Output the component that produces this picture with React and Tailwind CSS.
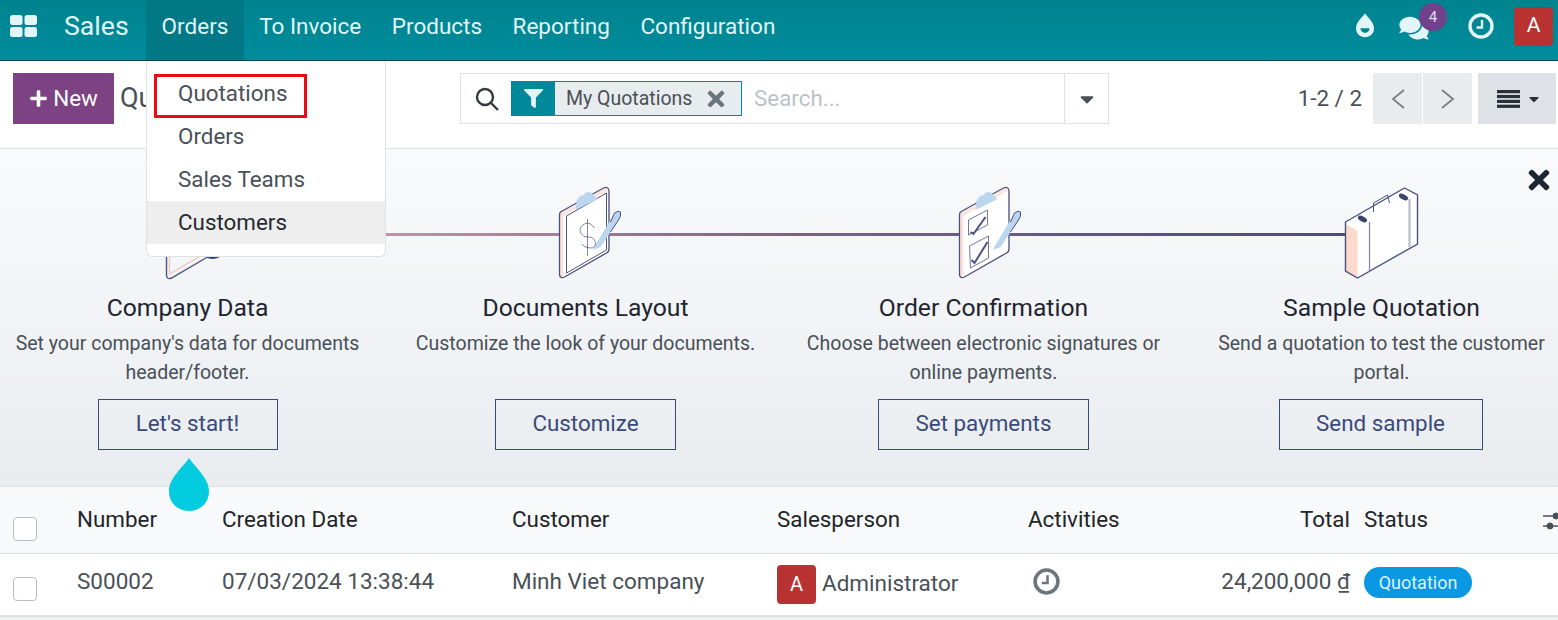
import React from "react";
import { FaPlus, FaComments, FaFilter, FaTimes, FaCaretDown } from "react-icons/fa";

function Drop({ className, inner }) {
  return (
    <svg viewBox="0 0 40 54" className={className} fill="currentColor">
      <path d="M20 0C25 8 40 20 40 33C40 45 31 53 20 53C9 53 0 45 0 33C0 20 15 8 20 0Z" />
      {inner && <path d="M20 43C14 43 10 38 10 33H30C30 38 26 43 20 43Z" fill="#00828f" />}
    </svg>
  );
}

function Clock({ className, stroke }) {
  return (
    <svg viewBox="0 0 26 26" className={className} fill="none" stroke={stroke}>
      <circle cx="13" cy="13" r="11" strokeWidth="3.4" />
      <path d="M14 7V14.5H8.5" strokeWidth="2.4" />
    </svg>
  );
}

function Clipboard({ checks, x0 }) {
  return (
    <svg viewBox={`${x0} 0 120 115`} className="w-[120px] h-[115px]" fill="none">
      <path d="M29 39L75 13L79 15V76L33 103L29 100Z" fill="#fde3dc" />
      <path d="M33 41L78 15V76L33 102Z" fill="#ffffff" />
      <path d="M30 37L73 13Q78 11 78.500 16V74Q78.500 77 76 78L34 102Q30 104 29 100V40Q29 38 30 37Z" stroke="#4a5380" strokeWidth="1.300" />
      {!checks && <path d="M36 41L76 18V75L36 98Z" stroke="#4a5380" strokeWidth="1" />}
      <path d="M45 35L46 26Q48 21 53 20Q56 15 61 18L65 22L67 24Z" fill="#bcd6f0" />
      <path d="M62 75L84 38Q88 35 90 37Q91 41 88 45L70 72Z" fill="#bcd6f0" />
      <path d="M80 47L84 38Q88 35 90 37Q91 41 88 45L80 57" stroke="#4a5380" strokeWidth="1" />
      {checks ? (
        <g stroke="#4a5380">
          <path d="M38 45L57 35V50L38 60Z" strokeWidth="0.800" />
          <path d="M39 71L58 61V83L40 93Z" strokeWidth="0.800" />
          <path d="M40 57L43 59L55 42" strokeWidth="2" />
          <path d="M41 85L44 88L57 67" strokeWidth="2" />
        </g>
      ) : (
        <g stroke="#4a5380" strokeWidth="0.700">
          <path d="M64 53Q59 46 54 49Q48 52 50 58Q53 63 58 62Q64 62 65 68Q65 73 60 73Q54 73 51 69" />
          <path d="M57 44V81" />
        </g>
      )}
    </svg>
  );
}

function Company() {
  return (
    <svg viewBox="0.5 0 120 115" className="w-[120px] h-[115px]" fill="none">
      <path d="M39 60V100Q39 105 44 103L80 82" stroke="#4a5380" strokeWidth="1.400" />
      <path d="M42 60V99L78 78" stroke="#f4c9bd" strokeWidth="1.400" />
      <ellipse cx="85" cy="79" rx="9" ry="5" fill="#39456f" />
    </svg>
  );
}

function Suitcase() {
  return (
    <svg viewBox="0.5 0 120 115" className="w-[120px] h-[115px]" fill="none">
      <path d="M24 47L83 13L96 20V69L36 103L24 96Z" fill="#ffffff" />
      <path d="M24 49L36 56V103L24 96Z" fill="#fbd9cd" />
      <path d="M88 24V72" stroke="#b4b8c8" strokeWidth="2" />
      <path d="M24 47L83 13L96 20V69L36 103L24 96Z" stroke="#4a5380" strokeWidth="1.400" />
      <path d="M48 47V97" stroke="#7a81a0" strokeWidth="1.200" />
      <path d="M52 37V28L66 20L68 28" stroke="#4a5380" strokeWidth="1" />
      <ellipse cx="41" cy="44" rx="5" ry="2.500" transform="rotate(28 41 44)" fill="#39456f" />
      <ellipse cx="82" cy="22" rx="5" ry="2.500" transform="rotate(28 82 22)" fill="#39456f" />
    </svg>
  );
}

function Step({ art, title, text, cta, btn }) {
  return (
    <div className="flex flex-col items-center px-[15px] text-center">
      <div className="h-[115px]">{art}</div>
      <div className="mt-[2px] text-[24.700px] leading-[32px] text-[#1f2530]">{title}</div>
      <div className="mt-[5px] h-[58px] text-[19.500px] leading-[29px] text-[#495057]">{text}</div>
      <button className={`mt-[12px] h-[51px] pb-[2px] ${btn} border border-[#3a4a78] text-[22.400px] text-[#3a4a78]`}>{cta}</button>
    </div>
  );
}

export default function App() {
  const navItems = ["To Invoice", "Products", "Reporting", "Configuration"];
  return (
    <div className="relative w-[1558px] h-[620px] overflow-hidden bg-[#eef0f2] font-['Roboto',sans-serif]">
      <header className="flex items-center h-[61px] border-b border-[#06454c] bg-[#00899a] bg-gradient-to-b from-[#00838f] to-[#008c9c] text-[#e2f6f8]">
        <svg viewBox="0 0 27 22" className="ml-[10px] w-[27px] h-[22px] mb-[8px]" fill="currentColor">
          <rect x="0" y="0" width="12.500" height="10" rx="2.500" />
          <rect x="14.500" y="0" width="12.500" height="10" rx="2.500" />
          <rect x="0" y="12" width="12.500" height="10" rx="2.500" />
          <rect x="14.500" y="12" width="12.500" height="10" rx="2.500" />
        </svg>
        <span className="ml-[27px] w-[82px] text-[26.700px] pb-[7px]">Sales</span>
        <div className="flex items-center justify-center w-[98px] h-full pb-[7px] bg-[#007885] text-[22.500px]">Orders</div>
        {navItems.map((t) => (
          <div key={t} className="px-[15.250px] pb-[7px] text-[22.500px]">{t}</div>
        ))}
        <div className="ml-auto flex items-center pr-[5px] pb-[8px]">
          <Drop className="w-[18px] h-[25px] -mt-[2px]" inner />
          <FaComments className="ml-[25px] w-[30px] h-[26px] mt-[3px]" />
          <Clock className="ml-[39px] w-[26px] h-[26px]" stroke="#e2f6f8" />
          <div className="ml-[20px] flex items-center justify-center w-[39px] h-[39px] rounded-[4px] bg-[#b83232] text-[21px] text-white">A</div>
        </div>
      </header>

      <section className="flex items-start h-[88px] border-b border-[#dee2e6] bg-white pt-[12px]">
        <div className="flex items-center w-[460px] pl-[13px]">
          <button className="flex items-center justify-center gap-[5px] w-[101px] h-[51px] bg-[#7c4284] text-[22.400px] text-white">
            <FaPlus className="w-[19px] h-[19px]" />New
          </button>
          <span className="ml-[6px] text-[27px] text-[#495057]">Quotations</span>
        </div>
        <div className="flex items-center w-[649px] h-[51px] border border-[#dee2e6]">
          <svg viewBox="0 0 24 24" className="ml-[14px] w-[24px] h-[24px]" fill="none" stroke="#343a40" strokeWidth="2.400">
            <circle cx="10" cy="10" r="8" />
            <path d="M16 16L23 23" />
          </svg>
          <div className="ml-[12px] flex items-center w-[231px] h-[35px] border border-[#00899a] bg-[#e9ecef]">
            <div className="flex items-center justify-center w-[43px] h-full bg-[#00899a] text-[#e2f6f8]">
              <FaFilter className="w-[19px] h-[19px]" />
            </div>
            <span className="ml-[11px] text-[19.500px] text-[#495057]">My Quotations</span>
            <FaTimes className="ml-[12px] w-[24px] h-[24px] text-[#6c757d]" />
          </div>
          <span className="ml-[12px] text-[22.400px] text-[#bcc1c7]">Search...</span>
          <div className="ml-auto flex items-center justify-center w-[44px] h-full border-l border-[#dee2e6]">
            <FaCaretDown className="w-[22px] h-[22px] text-[#495057]" />
          </div>
        </div>
        <span className="ml-auto h-[51px] flex items-center text-[22.400px] text-[#495057]">1-2 / 2</span>
        <button className="ml-[11px] flex items-center justify-center w-[49px] h-[51px] bg-[#e9ecef]">
          <svg viewBox="0 0 16 22" className="w-[16px] h-[22px]" fill="none" stroke="#7b7f84" strokeWidth="1.800"><path d="M14 2L3 11L14 20" /></svg>
        </button>
        <button className="ml-px flex items-center justify-center w-[49px] h-[51px] bg-[#e9ecef]">
          <svg viewBox="0 0 16 22" className="w-[16px] h-[22px]" fill="none" stroke="#7b7f84" strokeWidth="1.800"><path d="M2 2L13 11L2 20" /></svg>
        </button>
        <button className="ml-[6px] mr-[2px] flex items-center justify-center gap-[6px] pl-[4px] w-[78px] h-[51px] bg-[#dee2e6]">
          <svg viewBox="0 0 23 18" className="w-[23px] h-[18px]" fill="#2b3038">
            <rect y="0" width="23" height="3.200" />
            <rect y="4.900" width="23" height="3.200" />
            <rect y="9.800" width="23" height="3.200" />
            <rect y="14.700" width="23" height="3.200" />
          </svg>
          <FaCaretDown className="w-[16px] h-[16px] text-[#2b3038]" />
        </button>
      </section>

      <section className="relative h-[338px] overflow-hidden border-b border-[#dee2e6] bg-gradient-to-b from-[#f9fafc] to-[#e9ecef]">
        <div className="absolute left-[187px] top-[84px] w-[1194px] h-[3px] bg-gradient-to-r from-[#e6a9b5] via-[#7a6484] to-[#464b7c]" />
        <FaTimes className="absolute left-[1524px] top-[16px] w-[30px] h-[30px] text-[#1d2530]" />
        <div className="relative -ml-[11.500px] pt-[26px] grid grid-cols-[398px_398px_398px_398px] w-[1592px]">
          <Step art={<Company />} title="Company Data" text="Set your company's data for documents header/footer." cta="Let's start!" btn="w-[180px]" />
          <Step art={<Clipboard x0={-4.5} />} title="Documents Layout" text="Customize the look of your documents." cta="Customize" btn="w-[181px]" />
          <Step art={<Clipboard checks x0={-6.5} />} title="Order Confirmation" text="Choose between electronic signatures or online payments." cta="Set payments" btn="w-[211px]" />
          <Step art={<Suitcase />} title="Sample Quotation" text="Send a quotation to test the customer portal." cta="Send sample" btn="w-[204px] mr-[2px]" />
        </div>
      </section>

      <div className="grid grid-cols-[77px_145px_290px_265px_251px_161px_161px_208px] items-center h-[67px] border-b border-[#dee2e6] bg-[#f8f9fa] text-[22.400px] text-[#212529]">
        <span className="ml-[13px] mt-[18px] w-[24px] h-[24px] rounded-[4px] border border-[#b9bdc2] bg-white" />
        <span>Number</span>
        <span>Creation Date</span>
        <span>Customer</span>
        <span>Salesperson</span>
        <span>Activities</span>
        <span className="text-right">Total</span>
        <span className="pl-[14px] flex items-center justify-between">
          Status
          <svg viewBox="0 0 15 20" className="w-[15px] h-[20px] mt-[5px] shrink-0" fill="#495057" stroke="#495057">
            <path d="M0 4H15" strokeWidth="1.500" />
            <circle cx="13" cy="4" r="3" />
            <path d="M0 14H15" strokeWidth="1.500" />
            <circle cx="7" cy="14" r="3" />
          </svg>
        </span>
      </div>

      <div className="grid grid-cols-[77px_145px_290px_265px_251px_161px_161px_208px] items-center h-[63px] pb-[5px] border-b-2 border-[#dee2e6] bg-white text-[22.500px] text-[#495057]">
        <span className="ml-[13px] mt-[13px] w-[24px] h-[24px] rounded-[4px] border border-[#b9bdc2] bg-white" />
        <span>S00002</span>
        <span>07/03/2024 13:38:44</span>
        <span>Minh Viet company</span>
        <span className="flex items-center">
          <span className="flex items-center justify-center w-[39px] h-[39px] mt-[4px] rounded-[4px] bg-[#b83232] text-[20px] text-white">A</span>
          <span className="ml-[6px] mt-[3px]">Administrator</span>
        </span>
        <span className="pl-[5px]"><Clock className="w-[27px] h-[27px] -mt-[1px]" stroke="#6c757d" /></span>
        <span className="text-right">24,200,000 <span className="underline">₫</span></span>
        <span className="pl-[14px]">
          <span className="inline-flex items-center justify-center w-[108px] h-[31px] rounded-full bg-[#0a98e3] text-[18px] text-[#dff3fd]">Quotation</span>
        </span>
      </div>

      <Drop className="absolute left-[169px] top-[458px] w-[40px] h-[54px] text-[#00cbdf]" />

      <div className="absolute left-[1419px] top-[3px] flex items-center justify-center w-[28px] h-[28px] rounded-full bg-[#71418b] text-[15px] text-[#e6dcec]">4</div>

      <nav className="absolute left-[146px] top-[61px] w-[240px] h-[196px] pt-[11px] rounded-b-[6px] border border-t-0 border-[#dee2e6] bg-white text-[22.400px] text-[#495057]">
        <div className="flex items-center h-[43px] px-[31px]">Quotations</div>
        <div className="flex items-center h-[43px] px-[31px]">Orders</div>
        <div className="flex items-center h-[43px] px-[31px]">Sales Teams</div>
        <div className="flex items-center h-[43px] px-[31px] bg-[#eeeeee] text-[#262a30]">Customers</div>
      </nav>
      <div className="absolute left-[154px] top-[74px] w-[153px] h-[44px] border-[3px] border-[#ee0a12]" />
    </div>
  );
}
